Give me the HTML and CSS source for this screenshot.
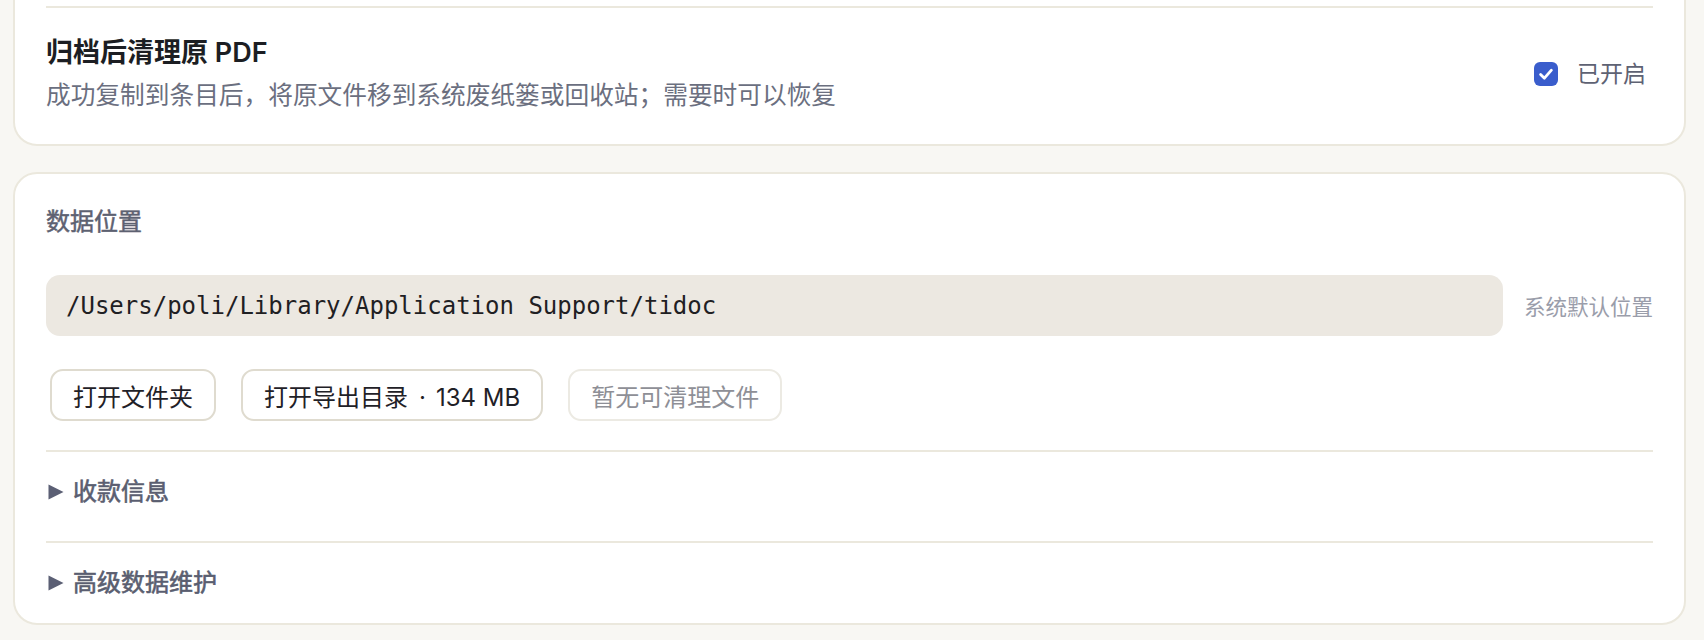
FILE: index.html
```html
<!DOCTYPE html>
<html lang="zh-CN">
<head>
<meta charset="utf-8">
<title>设置</title>
<link rel="stylesheet" href="styles.css">
</head>
<body>
<main class="page">
  <section class="card card-top">
    <div class="setting-row">
      <div class="setting-text">
        <div class="setting-title">归档后清理原 PDF</div>
        <div class="setting-desc">成功复制到条目后，将原文件移到系统废纸篓或回收站；需要时可以恢复</div>
      </div>
      <label class="toggle">
        <svg class="check" width="24" height="24" viewBox="0 0 24 24" aria-hidden="true">
          <rect x="0" y="0" width="24" height="24" rx="6" fill="#3a5dcc"/>
          <path d="M6.6 12.4 L10.4 16.2 L17.4 8.2" fill="none" stroke="#ffffff" stroke-width="2.8" stroke-linecap="round" stroke-linejoin="round"/>
        </svg>
        <span class="toggle-label">已开启</span>
      </label>
    </div>
  </section>

  <section class="card card-data">
    <div class="section-label">数据位置</div>
    <div class="path-row">
      <div class="path-box">/Users/poli/Library/Application Support/tidoc</div>
      <span class="path-note">系统默认位置</span>
    </div>
    <div class="btn-row">
      <button class="btn">打开文件夹</button>
      <button class="btn">打开导出目录<span class="sep">·</span>134 MB</button>
      <button class="btn btn-disabled" disabled>暂无可清理文件</button>
    </div>
    <details class="fold">
      <summary><svg class="tri" width="16" height="16" viewBox="0 0 16 16" aria-hidden="true"><polygon points="0.5,0.5 15.5,8 0.5,15.5" fill="#5b5f74"/></svg>收款信息</summary>
    </details>
    <details class="fold fold-last">
      <summary><svg class="tri" width="16" height="16" viewBox="0 0 16 16" aria-hidden="true"><polygon points="0.5,0.5 15.5,8 0.5,15.5" fill="#5b5f74"/></svg>高级数据维护</summary>
    </details>
  </section>
</main>
</body>
</html>
```

FILE: styles.css
```css
html, body {
  margin: 0;
  padding: 0;
}

body {
  background: #f8f7f3;
  font-family: Inter, "Noto Sans CJK SC", sans-serif;
  color: #1d1f24;
}

.page {
  display: flex;
  flex-direction: column;
  gap: 26px;
  padding: 0 18px 40px 13px;
  margin-top: -40px;
}

.card {
  background: #ffffff;
  border: 2px solid #ebe8dd;
  border-radius: 24px;
  padding: 0 31px;
}

.card-top {
  padding-top: 44px;
}

.setting-row {
  border-top: 2px solid #ebe8dd;
  padding: 26px 0 30px;
  display: flex;
  align-items: center;
  justify-content: space-between;
}

.setting-title {
  font-size: 27px;
  line-height: 38px;
  font-weight: 600;
  color: #1c1e23;
}

.setting-desc {
  margin-top: 5px;
  font-size: 24.7px;
  line-height: 37px;
  color: #6b6f7f;
}

.toggle {
  display: flex;
  align-items: center;
  gap: 19px;
  margin-right: 7px;
}

.check {
  display: block;
}

.toggle-label {
  font-size: 23px;
  line-height: 34px;
  color: #5e6273;
}

.card-data {
  padding-top: 30px;
}

.section-label {
  font-size: 24px;
  line-height: 36px;
  font-weight: 400;
  -webkit-text-stroke: 0.5px currentColor;
  color: #5d6171;
}

.path-row {
  margin-top: 35px;
  display: flex;
  align-items: center;
  gap: 21px;
}

.path-box {
  flex: 1;
  height: 61px;
  display: flex;
  align-items: center;
  padding: 0 20px;
  background: #ece8e1;
  border-radius: 14px;
  font-family: "DejaVu Sans Mono", monospace;
  font-size: 24px;
  color: #1f2023;
}

.path-note {
  font-size: 21.5px;
  color: #9a9daa;
  white-space: nowrap;
}

.btn-row {
  margin: 33px 0 29px 4px;
  display: flex;
  gap: 25px;
}

.btn {
  height: 52px;
  box-sizing: border-box;
  padding: 0 21px;
  border: 2px solid #dfdbcf;
  border-radius: 13px;
  background: #ffffff;
  font-family: Inter, "Noto Sans CJK SC", sans-serif;
  font-size: 24px;
  color: #1f2127;
  white-space: nowrap;
}

.sep {
  margin: 0 10px 0 11px;
}

.btn-disabled {
  border-color: #eceae3;
  color: #8e8f96;
}

.fold {
  border-top: 2px solid #ebe8dd;
  padding: 22px 0 31px;
}

.fold-last {
  padding-bottom: 22px;
}

.fold summary {
  list-style: none;
  display: flex;
  align-items: center;
  font-size: 24px;
  line-height: 36px;
  font-weight: 400;
  -webkit-text-stroke: 0.6px currentColor;
  color: #5a5e70;
}

.fold summary::-webkit-details-marker {
  display: none;
}

.tri {
  display: block;
  margin: 0 9px 0 2px;
  width: 16px;
  height: 16px;
  -webkit-text-stroke: 0;
}
```
